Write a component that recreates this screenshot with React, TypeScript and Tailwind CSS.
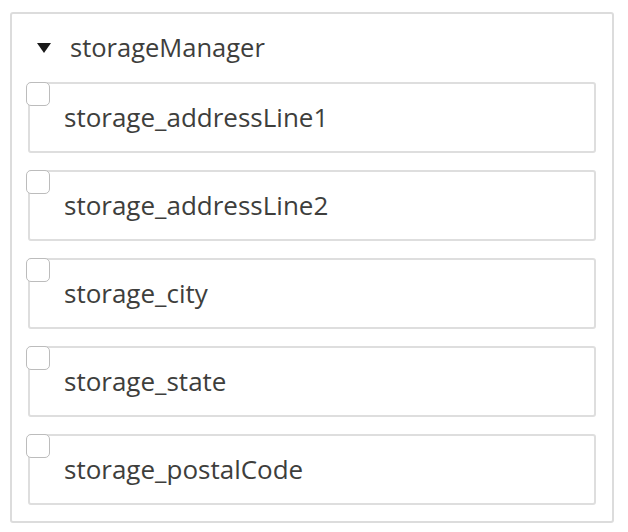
import React from "react";

const items = [
  "storage_addressLine1",
  "storage_addressLine2",
  "storage_city",
  "storage_state",
  "storage_postalCode",
];

export default function App() {
  return (
    <div className="w-[628px] h-[532px] bg-white pt-[12px] pl-[10px]" style={{ fontFamily: "'Open Sans', sans-serif" }}>
      <div className="w-[604px] h-[511px] border-2 border-[#dcdcdc] rounded-[3px] px-4">
        <div className="h-[68px] flex items-center">
          <svg width="14" height="11" viewBox="0 0 14 11" className="ml-[9px] mr-[19px]">
            <polygon points="0,0 14,0 7,10" fill="#1a1a1a" />
          </svg>
          <span className="text-[25.5px] text-[#3e3e3c] leading-none">storageManager</span>
        </div>
        <div className="flex flex-col gap-[17px]">
          {items.map((t) => (
            <div key={t} className="relative h-[71px] border-2 border-[#dedede] rounded-[3px] flex items-center pl-[34px] pb-[2px]">
              <div className="absolute -left-[4px] -top-[2px] w-[24px] h-[24px] border-[1.5px] border-[#bcbcbc] rounded-[5px] bg-white" />
              <span className="text-[26px] text-[#3e3e3c] leading-none">{t}</span>
            </div>
          ))}
        </div>
      </div>
    </div>
  );
}
